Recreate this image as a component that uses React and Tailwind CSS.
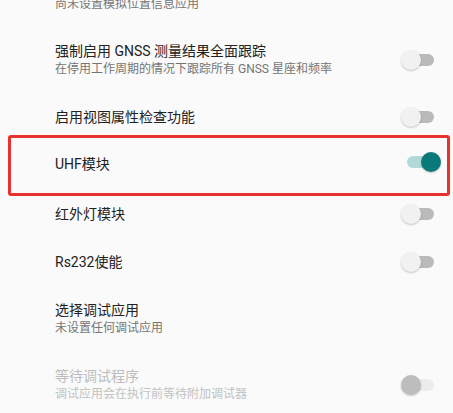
import React from "react";

function Switch({ on = false, disabled = false }) {
  const track = on ? "bg-[#b3d8d8]" : disabled ? "bg-[#ececec]" : "bg-[#bababa]";
  const thumb = on
    ? "left-[20px] bg-[#097a79]"
    : disabled
    ? "left-0 bg-[#bdbdbd]"
    : "left-0 bg-[#f1f1f1]";
  return (
    <div className="relative w-[40px] h-[20px] shrink-0">
      <div className={`absolute left-[6px] top-[4px] w-[27px] h-[12px] rounded-full ${track}`} />
      <div
        className={`absolute top-0 w-[20px] h-[20px] rounded-full shadow-[0_1px_2px_rgba(0,0,0,0.22)] ${thumb}`}
      />
    </div>
  );
}

function Row({ h, title, sub, sw, disabled, children }) {
  return (
    <div className={`relative flex items-center justify-between pl-[55px] pr-[12px] ${h}`}>
      <div className="flex flex-col">
        <div
          className={`text-[14px] leading-[18px] ${disabled ? "text-[#bdbdbd]" : "text-[#222222]"}`}
        >
          {title}
        </div>
        {sub && (
          <div
            className={`text-[12px] leading-[18px] ${disabled ? "text-[#c2c2c2]" : "text-[#757575]"}`}
          >
            {sub}
          </div>
        )}
      </div>
      {sw}
      {children}
    </div>
  );
}

export default function App() {
  return (
    <div className="w-[453px] h-[413px] overflow-hidden bg-[#fafafa] font-['Roboto','Noto_Sans_CJK_SC',sans-serif]">
      <div className="flex flex-col h-[29px] pl-[55px]">
        <div className="-mt-[5px] text-[12px] leading-[18px] text-[#757575]">尚未设置模拟位置信息应用</div>
      </div>
      <Row
        h="h-[62px]"
        title="强制启用 GNSS 测量结果全面跟踪"
        sub="在停用工作周期的情况下跟踪所有 GNSS 星座和频率"
        sw={<Switch />}
      />
      <Row h="h-[51px]" title="启用视图属性检查功能" sw={<Switch />} />
      <Row h="h-[44px]" title="UHF模块" sw={<div className="mb-[4px]"><Switch on /></div>}>
        <div className="absolute left-[8px] right-[3px] -top-[7px] -bottom-[10px] rounded-[3px] border-[3px] border-[#e8322f] pointer-events-none" />
      </Row>
      <Row h="h-[56px]" title="红外灯模块" sw={<Switch />} />
      <Row h="h-[40px]" title="Rs232使能" sw={<Switch />} />
      <Row h="h-[74px]" title="选择调试应用" sub="未设置任何调试应用" />
      <Row
        h="h-[57px]"
        title="等待调试程序"
        sub="调试应用会在执行前等待附加调试器"
        disabled
        sw={<Switch disabled />}
      />
    </div>
  );
}
